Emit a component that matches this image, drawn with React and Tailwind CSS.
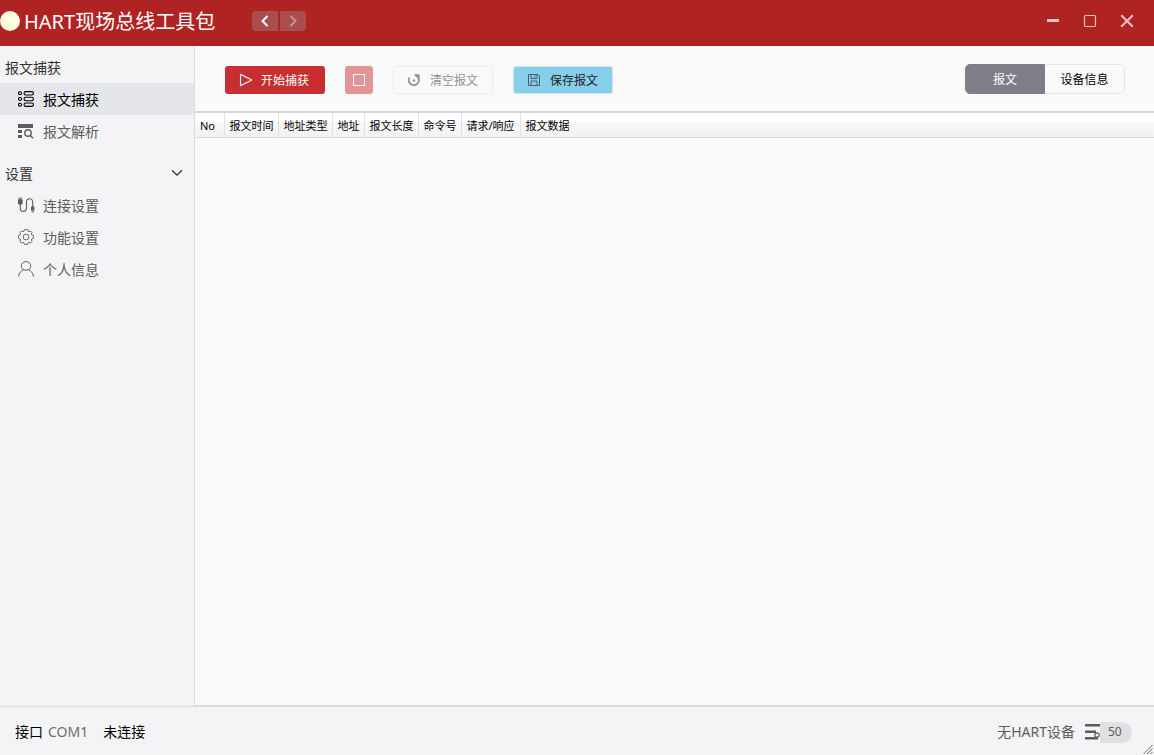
import React, { useState } from 'react';

const columns = [
    { label: 'No', width: 'w-[29px]' },
    { label: '报文时间', width: 'w-[54px]' },
    { label: '地址类型', width: 'w-[54px]' },
    { label: '地址', width: 'w-[32px]' },
    { label: '报文长度', width: 'w-[54px]' },
    { label: '命令号', width: 'w-[43px]' },
    { label: '请求/响应', width: 'w-[59px]' },
    { label: '报文数据', width: '' },
];

const CaptureIcon = () => (
    <svg width="16" height="16" viewBox="0 0 16 16" fill="none" stroke="currentColor" strokeWidth="1.1">
        <circle cx="2" cy="2.2" r="1.5" />
        <circle cx="2" cy="8" r="1.5" />
        <circle cx="2" cy="13.8" r="1.5" />
        <rect x="6" y="0.6" width="9.4" height="3.4" rx="1.7" />
        <rect x="6" y="6.3" width="9.4" height="3.4" rx="1.7" />
        <rect x="6" y="12" width="9.4" height="3.4" rx="1.7" />
    </svg>
);

const ParseIcon = () => (
    <svg width="16" height="16" viewBox="0 0 16 16" fill="currentColor">
        <rect x="0" y="1" width="15" height="4" />
        <rect x="0" y="7" width="4" height="3" />
        <rect x="0" y="12" width="4" height="3" />
        <circle cx="10" cy="10" r="3.2" fill="none" stroke="currentColor" strokeWidth="1.4" />
        <path d="M12.2 12.2l2.8 3" stroke="currentColor" strokeWidth="1.5" />
    </svg>
);

const CableIcon = () => (
    <svg width="17" height="16" viewBox="0 0 17 16" fill="currentColor">
        <path d="M0.5 0.5h3.5v3H0.5z" fill="#8a8a8a" />
        <path d="M0 2.5h4.6v3.8L3.5 7.8H1.1L0 6.3z" />
        <path d="M2.3 7.5v3.8a3.1 3.1 0 0 0 6.2 0V4.8a3.1 3.1 0 0 1 6.2 0V10" fill="none" stroke="currentColor" strokeWidth="1.1" />
        <rect x="13" y="9.5" width="3.4" height="4" />
        <rect x="13.5" y="13.2" width="2.4" height="2.3" fill="#8a8a8a" />
    </svg>
);

const GearIcon = () => (
    <svg width="16" height="16" viewBox="0 0 16 16" fill="none" stroke="currentColor" strokeWidth="0.9" strokeLinejoin="round">
        <path d="M6.5 0.6h3l.5 1.6 1 .5 1.5-.8 1.6 1.6-.8 1.5.5 1 1.6.5v3l-1.6.5-.5 1 .8 1.5-1.6 1.6-1.5-.8-1 .5-.5 1.6h-3l-.5-1.6-1-.5-1.5.8-1.6-1.6.8-1.5-.5-1L.6 9.5v-3l1.6-.5.5-1-.8-1.5 1.6-1.6 1.5.8 1-.5z" />
        <circle cx="8" cy="8" r="2.9" />
    </svg>
);

const UserIcon = () => (
    <svg width="16" height="16" viewBox="0 0 16 16" fill="none" stroke="currentColor" strokeWidth="1">
        <ellipse cx="8" cy="4.9" rx="4.8" ry="4.3" />
        <path d="M0.5 15.5c.4-3.4 2.4-5.6 5.2-6.7M15.5 15.5c-.4-3.4-2.4-5.6-5.2-6.7" />
    </svg>
);

const NavItem = ({ icon, label, active, onClick }) => (
    <button
        type="button"
        onClick={onClick}
        className={`flex h-8 w-full items-center pl-[18px] text-sm ${active ? 'bg-[#e5e6ea] text-black' : 'text-[#5c5c5c]'}`}
    >
        <span className="flex w-[25px] items-center">{icon}</span>
        <span className="pt-0.5">{label}</span>
    </button>
);

const TitleBar = () => (
    <header className="flex h-[46px] shrink-0 items-center bg-[#b02323] pb-1 text-white">
        <span className="h-5 w-5 rounded-full bg-[#ffffe0]"></span>
        <h1 className="ml-1 w-[208px] pt-0.5 text-xl whitespace-nowrap">HART现场总线工具包</h1>
        <div className="ml-5 flex gap-0.5">
            <button type="button" aria-label="后退" className="flex h-5 w-[26px] items-center justify-center rounded-l-sm bg-[#a94d4e]">
                <svg width="8" height="12" viewBox="0 0 8 12" fill="none" stroke="currentColor" strokeWidth="2">
                    <path d="M6.5 1L1.5 6l5 5" />
                </svg>
            </button>
            <button type="button" aria-label="前进" disabled className="flex h-5 w-[26px] items-center justify-center rounded-r-sm bg-[#a94d4e] text-[#cf9394]">
                <svg width="8" height="12" viewBox="0 0 8 12" fill="none" stroke="currentColor" strokeWidth="2">
                    <path d="M1.5 1l5 5-5 5" />
                </svg>
            </button>
        </div>
        <div className="mr-5 ml-auto flex gap-[23px] text-[#f3c3c4]">
            <button type="button" aria-label="最小化" className="flex w-[14px] justify-center">
                <svg width="14" height="14" viewBox="0 0 14 14">
                    <rect x="1" y="5" width="12" height="3" rx="0.5" fill="currentColor" />
                </svg>
            </button>
            <button type="button" aria-label="最大化" className="flex w-[14px] justify-center">
                <svg width="14" height="14" viewBox="0 0 14 14" fill="none" stroke="currentColor" strokeWidth="1.2">
                    <rect x="1.5" y="1.5" width="11" height="11" rx="1.2" />
                </svg>
            </button>
            <button type="button" aria-label="关闭" className="flex w-[14px] justify-center">
                <svg width="14" height="14" viewBox="0 0 14 14" stroke="currentColor" strokeWidth="2">
                    <path d="M1.2 1.2l11.6 11.6M12.8 1.2L1.2 12.8" />
                </svg>
            </button>
        </div>
    </header>
);

const Sidebar = ({ page, setPage }) => {
    const [open, setOpen] = useState(true);

    return (
        <nav className="w-[195px] shrink-0 border-r border-[#dcdcdc]">
            <h2 className="flex h-[37px] items-center pt-1.5 pl-[5px] text-sm text-[#333]">报文捕获</h2>
            <NavItem icon={<CaptureIcon />} label="报文捕获" active={page === 'capture'} onClick={() => setPage('capture')} />
            <NavItem icon={<ParseIcon />} label="报文解析" active={page === 'parse'} onClick={() => setPage('parse')} />

            <button
                type="button"
                aria-expanded={open}
                onClick={() => setOpen(!open)}
                className="mt-2.5 flex h-8 w-full items-center justify-between pr-[11px] pl-[5px] text-sm text-[#333]"
            >
                <span className="pt-0.5">设置</span>
                <svg width="12" height="8" viewBox="0 0 12 8" fill="none" stroke="currentColor" strokeWidth="1.3">
                    <path d="M1 1.2l5 5 5-5" />
                </svg>
            </button>
            {open && (
                <>
                    <NavItem icon={<CableIcon />} label="连接设置" active={page === 'connect'} onClick={() => setPage('connect')} />
                    <NavItem icon={<GearIcon />} label="功能设置" active={page === 'feature'} onClick={() => setPage('feature')} />
                    <NavItem icon={<UserIcon />} label="个人信息" active={page === 'profile'} onClick={() => setPage('profile')} />
                </>
            )}
        </nav>
    );
};

const Toolbar = ({ view, setView }) => (
    <div className="flex h-[65px] items-end gap-5 pr-[29px] pb-[17px] pl-[30px] text-xs">
        <button type="button" className="flex h-7 w-[100px] items-center rounded-[3px] bg-[#c72e30] pl-[14px] text-white">
            <svg width="14" height="14" viewBox="0 0 14 14" fill="none" stroke="currentColor" strokeWidth="1.1" strokeLinejoin="round">
                <path d="M1.5 1.2L12.8 7 1.5 12.8z" />
            </svg>
            <span className="pt-0.5 pl-2">开始捕获</span>
        </button>
        <button type="button" aria-label="停止捕获" disabled className="flex h-7 w-7 items-center justify-center rounded-[3px] bg-[#e29596] text-white">
            <svg width="12" height="12" viewBox="0 0 12 12" fill="none" stroke="currentColor">
                <rect x="0.5" y="0.5" width="11" height="11" />
            </svg>
        </button>
        <button type="button" disabled className="flex h-7 w-[100px] items-center rounded-[3px] border border-[#ececec] pl-[14px] text-[#929292]">
            <svg width="12" height="12" viewBox="0 0 12 12" fill="none" stroke="currentColor" strokeWidth="1.7">
                <path d="M1.6 3.4A5 5 0 1 0 9.8 3" />
                <path d="M5.6 0.2h6v6L9.6 4.3 7.6 2.6z" fill="currentColor" stroke="none" />
                <circle cx="6" cy="6.5" r="1.2" fill="currentColor" stroke="none" />
            </svg>
            <span className="pt-0.5 pl-2.5">清空报文</span>
        </button>
        <button type="button" className="flex h-7 w-[100px] items-center rounded-[3px] border border-[#d9dfe2] bg-[#87ceeb] pl-[14px] text-[#222]">
            <svg width="12" height="12" viewBox="0 0 12 12" fill="none" stroke="#47606c">
                <path d="M0.5 0.5h9.5l1.5 1.5v9.5h-11z" />
                <path d="M3 0.5v4h6v-4M7 1.5v2M3 11.5v-4.5h6v4.5" />
            </svg>
            <span className="pt-0.5 pl-2.5">保存报文</span>
        </button>
        <div className="ml-auto flex h-[30px]">
            <button
                type="button"
                onClick={() => setView('message')}
                className={`w-20 rounded-l-[5px] border pt-0.5 ${view === 'message' ? 'border-[#7e7e89] bg-[#7e7e89] text-white' : 'border-[#e4e4e6] text-black'}`}
            >
                报文
            </button>
            <button
                type="button"
                onClick={() => setView('device')}
                className={`w-20 rounded-r-[5px] border border-l-0 pt-0.5 ${view === 'device' ? 'border-[#7e7e89] bg-[#7e7e89] text-white' : 'border-[#e4e4e6] text-black'}`}
            >
                设备信息
            </button>
        </div>
    </div>
);

const MessageTable = () => (
    <table className="w-full table-fixed border-collapse border-t-2 border-b border-t-[#d8d8d9] border-b-[#d5d7da] text-[11px]">
        <thead>
            <tr className="h-[25px] bg-linear-to-b from-white from-40% via-[#f7f8f9] via-40% to-[#f0f2f4]">
                {columns.map((col) => (
                    <th
                        key={col.label}
                        scope="col"
                        className={`border-r border-[#dfe0e2] p-0 pt-0.5 pl-[5px] text-left leading-4 font-normal whitespace-nowrap text-black last:border-r-0 ${col.width}`}
                    >
                        {col.label}
                    </th>
                ))}
            </tr>
        </thead>
        <tbody></tbody>
    </table>
);

const StatusBar = () => (
    <footer className="relative flex h-[49px] shrink-0 items-center border-t border-[#dcdcde] pt-0.5 pr-[22px] pl-[15px] text-sm text-black">
        <span>接口</span>
        <span className="ml-[5px] text-[#6e6e6e]">COM1</span>
        <span className="ml-[15px]">未连接</span>
        <span className="ml-auto text-[#5c5c5c]">无HART设备</span>
        <svg className="ml-[10px] text-[#5c5c5c]" width="15" height="16" viewBox="0 0 15 16" fill="currentColor">
            <rect x="0" y="0" width="15" height="2.5" />
            <rect x="0" y="6.5" width="11" height="2.5" />
            <rect x="0" y="13" width="13" height="2.5" />
            <circle cx="12" cy="11" r="2.2" fill="#f4f4f6" stroke="currentColor" strokeWidth="1.2" />
        </svg>
        <span className="flex h-[21px] w-8 items-center rounded-r-[10px] bg-[#e0e0e0] pl-2 text-xs text-[#5c5c5c]">50</span>
        <svg className="absolute right-0 bottom-0 text-[#6b6b6b]" width="12" height="12" viewBox="0 0 12 12" stroke="currentColor">
            <path d="M1.5 11L10.5 2M5 11l5.5-5.5M8.5 11l2-2" />
        </svg>
    </footer>
);

const App = () => {
    const [page, setPage] = useState('capture');
    const [view, setView] = useState('message');

    return (
        <div className="flex min-h-screen flex-col bg-[#f4f4f6] font-['Noto_Sans','Noto_Sans_CJK_SC',sans-serif]">
            <TitleBar />
            <div className="flex flex-1">
                <Sidebar page={page} setPage={setPage} />
                <main className="min-w-0 flex-1 border-b border-[#dcdcde] bg-[#fafafa]">
                    <Toolbar view={view} setView={setView} />
                    <MessageTable />
                </main>
            </div>
            <StatusBar />
        </div>
    );
};

export default App;
